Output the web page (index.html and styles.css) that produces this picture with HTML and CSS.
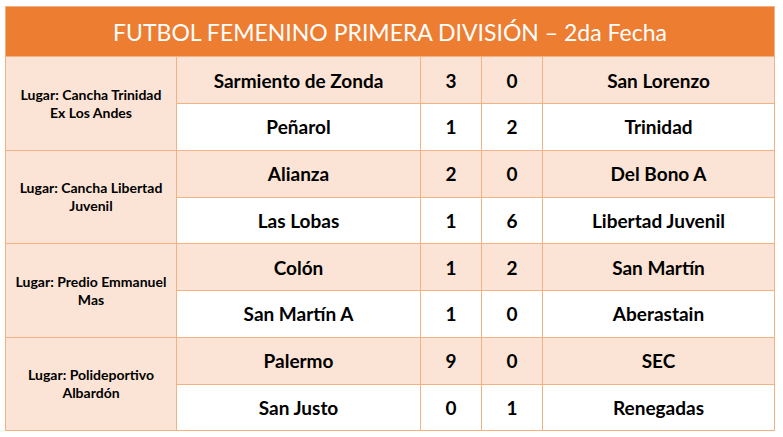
FILE: index.html
```html
<!DOCTYPE html>
<html lang="es">
<head>
<meta charset="utf-8">
<title>Futbol Femenino</title>
<link rel="stylesheet" href="styles.css">
</head>
<body>
<table class="fixture">
  <colgroup>
    <col class="c-venue">
    <col class="c-team">
    <col class="c-score">
    <col class="c-score">
    <col class="c-team2">
  </colgroup>
  <thead>
    <tr><th colspan="5" class="title">FUTBOL FEMENINO PRIMERA DIVISIÓN – 2da Fecha</th></tr>
  </thead>
  <tbody>
    <tr class="shade">
      <td rowspan="2" class="venue">Lugar: Cancha Trinidad<br>Ex Los Andes</td>
      <td class="team">Sarmiento de Zonda</td><td class="score">3</td><td class="score">0</td><td class="team">San Lorenzo</td>
    </tr>
    <tr class="plain">
      <td class="team">Peñarol</td><td class="score">1</td><td class="score">2</td><td class="team">Trinidad</td>
    </tr>
    <tr class="shade">
      <td rowspan="2" class="venue">Lugar: Cancha Libertad<br>Juvenil</td>
      <td class="team">Alianza</td><td class="score">2</td><td class="score">0</td><td class="team">Del Bono A</td>
    </tr>
    <tr class="plain">
      <td class="team">Las Lobas</td><td class="score">1</td><td class="score">6</td><td class="team">Libertad Juvenil</td>
    </tr>
    <tr class="shade">
      <td rowspan="2" class="venue">Lugar: Predio Emmanuel<br>Mas</td>
      <td class="team">Colón</td><td class="score">1</td><td class="score">2</td><td class="team">San Martín</td>
    </tr>
    <tr class="plain">
      <td class="team">San Martín A</td><td class="score">1</td><td class="score">0</td><td class="team">Aberastain</td>
    </tr>
    <tr class="shade">
      <td rowspan="2" class="venue">Lugar: Polideportivo<br>Albardón</td>
      <td class="team">Palermo</td><td class="score">9</td><td class="score">0</td><td class="team">SEC</td>
    </tr>
    <tr class="plain">
      <td class="team">San Justo</td><td class="score">0</td><td class="score">1</td><td class="team">Renegadas</td>
    </tr>
  </tbody>
</table>
</body>
</html>
```
FILE: styles.css
```css
html, body {
  margin: 0;
  padding: 0;
  background: #ffffff;
}
body {
  padding: 6px 0 0 5px;
  font-family: Lato, "Open Sans", "Liberation Sans", sans-serif;
  color: #000;
}
.fixture {
  border-collapse: collapse;
  table-layout: fixed;
  width: 769px;
}
.c-venue { width: 171px; }
.c-team { width: 244px; }
.c-score { width: 61px; }
.c-team2 { width: 232px; }

.fixture td, .fixture th {
  border: 1px solid #f4b183;
  padding: 0;
  text-align: center;
  vertical-align: middle;
}
.title {
  background: #ed7d31;
  border-color: #ed7d31;
  color: #ffffff;
  font-weight: 400;
  font-size: 23px;
  height: 49px;
}
.fixture tbody tr.shade { height: 47px; }
.fixture tbody tr.plain { height: 46.5px; }
.shade td { background: #fbe4d5; }
.plain td { background: #ffffff; }
.fixture td.venue {
  background: #fbe4d5;
  font-size: 14px;
  font-weight: 700;
  line-height: 18px;
  padding-top: 1px;
}
.team, .score {
  font-size: 19px;
  font-weight: 700;
}
```
